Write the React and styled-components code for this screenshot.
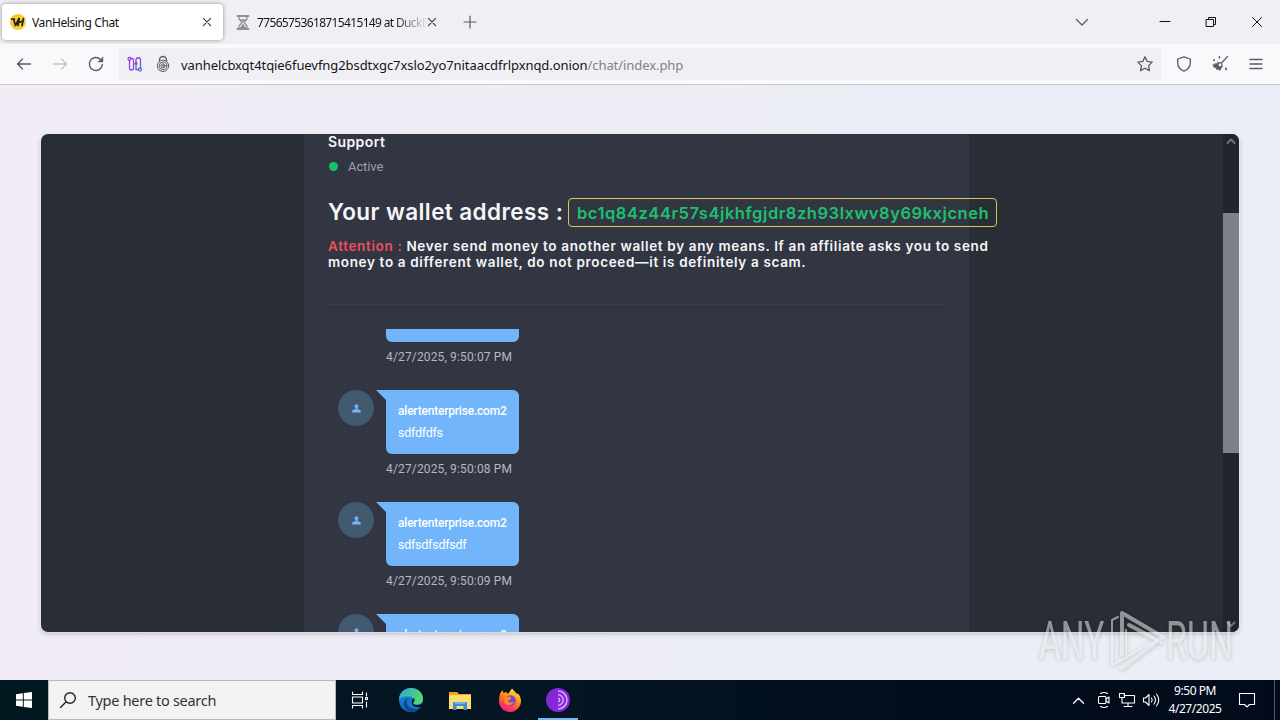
import React from "react";
import styled, { createGlobalStyle } from "styled-components";

const UI_FONT = `"Noto Sans", "Open Sans", sans-serif`;
const CHAT_FONT = `Roboto, "Liberation Sans", sans-serif`;
const HEADING_FONT = `Inter, "Liberation Sans", sans-serif`;

const MESSAGES = [
  { id: 1, text: "dsfsdf", time: "4/27/2025, 9:50:07 PM" },
  { id: 2, text: "sdfdfdfs", time: "4/27/2025, 9:50:08 PM" },
  { id: 3, text: "sdfsdfsdfsdf", time: "4/27/2025, 9:50:09 PM" },
  { id: 4, text: "sdfsdf", time: "4/27/2025, 9:50:10 PM" },
];

const GlobalStyle = createGlobalStyle`
  * { box-sizing: border-box; }
  body { margin: 0; overflow: hidden; }
`;

const Screen = styled.div`
  position: relative;
  display: flex;
  flex-direction: column;
  width: 1280px;
  height: 720px;
  overflow: hidden;
  font-family: ${UI_FONT};
  color: #15141a;
`;

const Icon = styled.svg`
  display: block;
  flex: none;
  width: ${props => props.$w || 16}px;
  height: ${props => props.$h || props.$w || 16}px;
  margin-left: ${props => props.$ml || 0}px;
  overflow: visible;
  fill: none;
  stroke: ${props => props.$color || "#5b5b66"};
  stroke-width: ${props => props.$stroke || 1.3};
  stroke-linecap: round;
  stroke-linejoin: round;
`;

// BROWSER
const TabStrip = styled.div`
  display: flex;
  flex: none;
  align-items: center;
  height: 44px;
  padding-left: 2px;
  background: #f0f0f4;
`;
const Tab = styled.div`
  display: flex;
  align-items: center;
  width: ${props => (props.$active ? 221 : 224)}px;
  height: 36px;
  padding: 0 ${props => (props.$active ? 12 : 11)}px 0 8px;
  border-radius: 4px;
  background: ${props => (props.$active ? "#fff" : "none")};
  box-shadow: ${props => (props.$active ? "0 0 4px rgba(0, 0, 0, 0.4)" : "none")};
`;
const TabTitle = styled.div`
  flex: 1;
  margin-left: ${props => (props.$faded ? 8 : 6)}px;
  overflow: hidden;
  white-space: nowrap;
  font-size: 12px;
  letter-spacing: ${props => props.$spacing}px;
  mask-image: ${props =>
    props.$faded ? "linear-gradient(to left, transparent, #000 34px)" : "none"};
`;
const Toolbar = styled.div`
  display: flex;
  flex: none;
  align-items: center;
  height: 41px;
  padding-left: 16px;
  background: #f9f9fb;
  border-bottom: 1px solid #cacad0;
`;
const AddressBar = styled.div`
  display: flex;
  align-items: center;
  width: 1042px;
  height: 32px;
  margin-left: 15px;
  padding: 0 8px;
  background: #f0f0f4;
`;
const Url = styled.div`
  flex: 1;
  margin-left: 11px;
  padding-top: 1px;
  white-space: nowrap;
  font-size: 13px;
  letter-spacing: -0.07px;
`;
const UrlPath = styled.span`
  color: #80808a;
`;

// PAGE
const Page = styled.main`
  display: flex;
  flex: none;
  justify-content: center;
  height: 595px;
  padding-top: 49px;
  background: linear-gradient(100deg, #f2ecf6 0%, #efecf5 30%, #ebeef6 65%, #ebeef6 100%);
`;
const Card = styled.div`
  display: flex;
  width: 1198px;
  height: 498px;
  overflow: hidden;
  border-radius: 7px;
  background: #292d36;
  box-shadow: 0 0 0 1px rgba(255, 255, 255, 0.35), 0 2px 5px rgba(40, 45, 60, 0.25);
`;
const Side = styled.div`
  width: ${props => props.$width}px;
`;
const Chat = styled.section`
  display: flex;
  flex-direction: column;
  width: 665px;
  padding: 0 25px 0 24px;
  background: #323642;
  font-family: ${CHAT_FONT};
`;
const ChatHeader = styled.header`
  height: 171px;
  flex: none;
  border-bottom: 1px solid #3a3e4a;
`;
const Contact = styled.div`
  height: 16px;
  color: #f6f6f9;
  font: 600 14px/16px ${HEADING_FONT};
  letter-spacing: 0.4px;
`;
const Status = styled.div`
  display: flex;
  align-items: center;
  height: 33px;
  color: #9a9dad;
  font-size: 13px;
  line-height: 31px;
  letter-spacing: -0.1px;
`;
const Dot = styled.span`
  width: 9px;
  height: 9px;
  margin: 0 10px 0 1px;
  border-radius: 50%;
  background: #18c26a;
`;
const Wallet = styled.div`
  width: 669px;
  position: relative;
  padding-top: 15px;
  color: #f6f6f9;
  font-family: ${HEADING_FONT};
`;
const WalletRow = styled.div`
  display: flex;
  align-items: flex-start;
  justify-content: space-between;
  height: 29px;
  white-space: nowrap;
`;
const WalletLabel = styled.div`
  font-size: 22.5px;
  font-weight: 600;
  line-height: 27px;
  letter-spacing: 0.41px;
`;
const Address = styled.div`
  width: 429px;
  height: 29px;
  padding-left: 8px;
  border: 1px solid #dfc458;
  border-radius: 4px;
  color: #1cc06f;
  font-size: 16.5px;
  font-weight: 600;
  line-height: 28px;
  letter-spacing: 0.55px;
`;
const Warning = styled.div`
  margin-top: 11px;
  font-size: 13.5px;
  font-weight: 600;
  line-height: 16px;
  letter-spacing: 0.65px;
  white-space: nowrap;
`;
const Danger = styled.span`
  color: #ee505b;
`;

const MessageList = styled.div`
  display: flex;
  flex: 1;
  flex-direction: column;
  justify-content: flex-start;
  min-height: 0;
  margin-top: 24px;
  overflow: hidden;
`;
const Message = styled.div`
  display: flex;
  flex: none;
  height: 112px;
  padding-left: 10px;

  &:first-child {
    margin-top: -51px;
  }
`;
const Avatar = styled.div`
  display: flex;
  align-items: center;
  justify-content: center;
  width: 36px;
  height: 36px;
  margin-right: 12px;
  border-radius: 50%;
  background: #435970;
`;
const Bubble = styled.div`
  position: relative;
  width: 133px;
  height: 64px;
  padding: 10px 12px;
  border-radius: 0 6px 6px 6px;
  background: #72b5fb;
  color: #fff;
  font-size: 12.5px;
  letter-spacing: -0.25px;
  line-height: 22px;
  white-space: nowrap;

  &::before {
    content: "";
    position: absolute;
    top: 0;
    left: -10px;
    border: 5px solid transparent;
    border-top-color: #72b5fb;
    border-right-color: #72b5fb;
  }
`;
const Sender = styled.div`
  font-size: 12px;
  font-weight: 500;
  letter-spacing: -0.2px;
`;
const Time = styled.div`
  margin-top: 7px;
  color: #b6b8c2;
  font-size: 12px;
  line-height: 16px;
  letter-spacing: 0.15px;
`;

const Scrollbar = styled.div`
  display: flex;
  flex-direction: column;
  align-items: center;
  justify-content: space-between;
  width: 16px;
  padding: 5px 0;
  background: #22252f;
`;
const Thumb = styled.div`
  width: 16px;
  height: 240px;
  margin-bottom: 101px;
  background: #7f8188;
`;

const Watermark = styled.div`
  position: absolute;
  top: 608px;
  left: 1039px;
  display: flex;
  align-items: center;
  height: 66px;
  color: rgba(255, 255, 255, 0.5);
  filter: drop-shadow(0 1px 2px rgba(0, 0, 0, 0.35));
`;
const WatermarkWord = styled.div`
  width: ${props => props.$width}px;
  font: 400 53px/66px Roboto, sans-serif;
  transform: scaleX(${props => props.$scale});
  transform-origin: left;
  white-space: nowrap;
`;

// TASKBAR
const Taskbar = styled.footer`
  display: flex;
  flex: none;
  align-items: center;
  height: 40px;
  background: linear-gradient(90deg, #021820, #031522 45%, #020d1c 75%, #020b1a);
  color: #fff;
`;
const StartButton = styled.div`
  display: flex;
  align-items: center;
  width: 48px;
  padding-left: 16px;
`;
const SearchBox = styled.div`
  display: flex;
  align-items: center;
  width: 288px;
  height: 40px;
  padding-left: 11px;
  border: 1px solid #b9b9b9;
  background: #f2f2f2;
  color: #333;
  font-size: 14.5px;
`;
const SearchText = styled.span`
  margin-left: 12px;
  letter-spacing: -0.28px;
`;
const AppButton = styled.div`
  display: flex;
  align-items: center;
  justify-content: center;
  width: ${props => props.$width || 49}px;
  height: 40px;
  border-bottom: 2px solid ${props => (props.$active ? "#76b9ed" : "transparent")};
  padding-top: 2px;
`;
const Tray = styled.div`
  display: flex;
  align-items: center;
  height: 40px;
  margin-left: auto;
`;
const Clock = styled.div`
  width: 60px;
  margin-left: 5px;
  font-size: 12px;
  line-height: 18px;
  letter-spacing: -0.45px;
  text-align: center;
  white-space: nowrap;
`;
const ShowDesktop = styled.div`
  width: 6px;
  height: 40px;
  margin-left: 19px;
  border-left: 1px solid #4d5660;
`;

const CloseIcon = ({ size = 8, ...props }) => (
  <Icon $w={size} viewBox="0 0 10 10" {...props}>
    <path d="M.5.5l9 9M9.5.5l-9 9" />
  </Icon>
);

const Favicon = () => (
  <Icon $w={16} viewBox="0 0 16 16">
    <circle cx="8" cy="8" r="8" fill="#f5cf30" stroke="none" />
    <path d="M1.5 5h3M3.5 5l2 6.5L9 4.5M9.2 4.5L8 11.5M13.5 4.5L12 11.5M8.5 8.5L13 7" stroke="#20211d" strokeWidth="1.7" />
  </Icon>
);

const Hourglass = () => (
  <Icon $w={12} $h={15} viewBox="0 0 12 15" $color="#909096" $ml={6}>
    <path d="M.5 1h11M.5 14h11" strokeWidth="2" />
    <path d="M2 1.500v2.500L5 7.500 2 11v2.500M10 1.500v2.500L7 7.500l3 3.500v2.500" />
    <path d="M3.500 4.500h5L6 7zM3 13l3-4 3 4z" fill="#909096" strokeWidth=".5" />
  </Icon>
);

const Navigation = () => (
  <>
    <Icon viewBox="0 0 16 16" $w={16}>
      <path d="M14.500 8H1.500M6.500 3L1.500 8l5 5" />
    </Icon>
    <Icon viewBox="0 0 16 16" $w={16} $ml={20} $color="#c2c2c8">
      <path d="M1.500 8h13M9.500 3l5 5-5 5" />
    </Icon>
    <Icon viewBox="0 0 16 16" $w={16} $ml={20} $stroke={1.4}>
      <path d="M14.300 8.500A6.500 6.500 0 1 1 12.500 3.500L14 5" />
      <path d="M15 1v5h-5z" fill="#5b5b66" strokeWidth=".4" />
    </Icon>
  </>
);

const CircuitIcon = () => (
  <Icon viewBox="0 0 16 16" $w={16} $color="url(#circuit)" $stroke={1.3}>
    <defs>
      <linearGradient id="circuit" x1="0" y1="0" x2="16" y2="16" gradientUnits="userSpaceOnUse">
        <stop stopColor="#c026e8" />
        <stop offset="1" stopColor="#3a7bc8" />
      </linearGradient>
    </defs>
    <circle cx="2.500" cy="2.800" r="1.500" />
    <circle cx="13" cy="13.500" r="1.500" />
    <path d="M2.500 4.500v7.500a2 2 0 0 0 4 0V7M4 2.500h1.500a1.500 1.500 0 0 1 1 1.500V6M9 13.500V4a2 2 0 0 1 4.500 0v7.500" />
    <path d="M9 13.500h2" />
    <circle cx="9" cy="7.500" r="1" />
  </Icon>
);

const OnionLock = () => (
  <Icon viewBox="0 0 14 16" $w={14} $h={16} $ml={13} $stroke={1}>
    <path d="M3.500 5V4a3.500 3.500 0 0 1 7 0v1" strokeWidth="1.400" />
    <circle cx="7" cy="9.800" r="5.700" />
    <circle cx="7" cy="9.800" r="3.800" />
    <circle cx="7" cy="9.800" r="2" />
    <circle cx="7" cy="9.800" r=".5" />
  </Icon>
);

const PersonIcon = () => (
  <Icon viewBox="0 0 10 10" $w={9} stroke="none">
    <path
      d="M5 .3a2.300 2.300 0 0 1 1 4.300v1.100c2 .1 3.800.9 3.800 2.200v1.500H.2V7.900c0-1.300 1.800-2.100 3.800-2.200V4.600A2.300 2.300 0 0 1 5 .3z"
      fill="#72b5fb"
      stroke="none"
    />
  </Icon>
);

const ChatMessage = ({ message }) => (
  <Message>
    <Avatar>
      <PersonIcon />
    </Avatar>
    <div>
      <Bubble>
        <Sender>alertenterprise.com2</Sender>
        {message.text}
      </Bubble>
      <Time>{message.time}</Time>
    </div>
  </Message>
);

const EdgeIcon = () => (
  <Icon viewBox="0 0 24 24" $w={24}>
    <defs>
      <linearGradient id="edgeTop" x1="0" y1="0" x2="1" y2=".4">
        <stop stopColor="#2ba5df" />
        <stop offset="1" stopColor="#54d876" />
      </linearGradient>
    </defs>
    <g stroke="none">
      <circle cx="12" cy="12" r="12" fill="#1477c9" />
      <path d="M0 12C0 4 6 0 12 0c7 0 12 5 12 10.500 0 4-3 6-6.500 6-3 0-4-1-3-2.500 1-2 0-5-4-5.500C5 8 1 10 0 12z" fill="url(#edgeTop)" />
      <path d="M9 10c-3 5 0 10 6 11 3 .4 5.500-.8 7-2.500-2 3.500-6 5.500-10 5.500C4 23 2 14 9 10z" fill="#104b91" />
      <path d="M14.500 14c-1 1.500 0 3 3.500 3 2 0 4-.5 6-2-.5 1.500-1 2.500-2 3.700-5 1.800-10-1.200-9-5.200.4-2 1-2.500 1.500-3.500 1.500 1 1.500 2.500 0 4z" fill="#021820" />
    </g>
  </Icon>
);

const FolderIcon = () => (
  <Icon viewBox="0 0 22 19" $w={22} $h={19}>
    <g stroke="none">
      <path d="M0 1h8l2 2h12v15H0z" fill="#e9a927" />
      <path d="M0 4h22v14H0z" fill="#ffdc70" />
      <path d="M4 11h14v8h-3.500v-4h-7v4H4z" fill="#3991d4" />
      <path d="M6 11h10v2H6z" fill="#65b5e8" />
    </g>
  </Icon>
);

const FirefoxIcon = () => (
  <Icon viewBox="0 0 24 24" $w={24}>
    <defs>
      <linearGradient id="fire" x1=".8" y1="0" x2=".3" y2="1">
        <stop stopColor="#fff044" />
        <stop offset=".4" stopColor="#ff980e" />
        <stop offset=".75" stopColor="#ff3d4f" />
        <stop offset="1" stopColor="#e5218a" />
      </linearGradient>
    </defs>
    <g stroke="none">
      <path d="M2 5.500L4.500 2l1 3L8 4l2 2 4-5.500 4.500 5 2 .5c2 3 2.500 5 2.500 7C23 19 18 24 12 24S1 19.500 1 13c0-3 .5-5 1-7.500z" fill="url(#fire)" />
      <circle cx="12.500" cy="12.500" r="5.300" fill="#7845d8" />
      <path d="M6 9l6-.5 1.500 2-3.500 2c1 3 4 2 6 1-1 4-7 5-9.500 1z" fill="#ff8b25" />
    </g>
  </Icon>
);

const TorIcon = () => (
  <Icon viewBox="0 0 24 24" $w={24} $color="#dda7ff" $stroke={1.5}>
    <circle cx="12" cy="12" r="12" fill="#8427d5" stroke="none" />
    <path d="M12 3a9 9 0 0 1 0 18M12 6.800a5.200 5.200 0 0 1 0 10.400M12 10.300a1.700 1.700 0 0 1 0 3.400" strokeLinecap="butt" />
  </Icon>
);

const TrayIcons = () => (
  <>
    <Icon viewBox="0 0 12 7" $w={11} $h={7} $color="#fff">
      <path d="M.5 6.500L6 1l5.500 5.500" />
    </Icon>
    <Icon viewBox="0 0 12 16" $w={12} $h={16} $ml={14} $color="#fff" $stroke={1.1}>
      <rect x=".5" y="4.500" width="7.500" height="7" rx="1" />
      <path d="M8 7l3-2v6L8 9M2.500 1.500q3.500-2 7 0M2.500 14.500q3.500 2 7 0" />
    </Icon>
    <Icon viewBox="0 0 16 14" $w={16} $h={14} $ml={9} $color="#fff" $stroke={1.1}>
      <path d="M5 2.500h10.500v7.500H4.500M3 5v5h1.500M5 13.500h8M9 10v3.500M.5.500h5v4h-5z" />
    </Icon>
    <Icon viewBox="0 0 17 14" $w={17} $h={14} $ml={8} $color="#fff" $stroke={1.1}>
      <path d="M.5 5h2l3.500-3.500v11L2.500 9h-2zM8.500 5q1.500 2 0 4M11 3q3 4 0 8M13.500 1q4.500 6 0 12" />
    </Icon>
  </>
);

export default function App() {
  return (
    <Screen>
      <GlobalStyle />
      <TabStrip>
        <Tab $active>
          <Favicon />
          <TabTitle $spacing={-0.4}>VanHelsing Chat</TabTitle>
          <CloseIcon $color="#333" />
        </Tab>
        <Tab>
          <Hourglass />
          <TabTitle $spacing={-0.65} $faded>
            77565753618715415149 at DuckDuckGo
          </TabTitle>
          <CloseIcon $color="#333" />
        </Tab>
        <Icon viewBox="0 0 12 12" $w={12} $ml={17} $stroke={1.2}>
          <path d="M6 0v12M0 6h12" />
        </Icon>
        <Icon viewBox="0 0 12 7" $w={12} $h={7} $ml={600}>
          <path d="M.5.5L6 6 11.500.5" />
        </Icon>
        <Icon viewBox="0 0 10 10" $w={10} $ml={72} $color="#111" $stroke={1}>
          <path d="M0 4.500h10" />
        </Icon>
        <Icon viewBox="0 0 10 10" $w={10} $ml={36} $color="#111" $stroke={1}>
          <path d="M.5 2.500h7v7h-7zM2.500 2.500v-2h7v7h-2" />
        </Icon>
        <CloseIcon size={10} $ml={36} $color="#111" $stroke={1} />
      </TabStrip>
      <Toolbar>
        <Navigation />
        <AddressBar>
          <CircuitIcon />
          <OnionLock />
          <Url>
            vanhelcbxqt4tqie6fuevfng2bsdtxgc7xslo2yo7nitaacdfrlpxnqd.onion
            <UrlPath>/chat/index.php</UrlPath>
          </Url>
          <Icon viewBox="0 0 16 16" $w={16}>
            <path d="M8 .8l2.200 4.600 5 .7-3.600 3.500.9 5L8 12.200l-4.500 2.400.9-5L.8 6.100l5-.7z" />
          </Icon>
        </AddressBar>
        <Icon viewBox="0 0 14 16" $w={14} $h={16} $ml={16}>
          <path d="M7 .8L13.300 3v3.500c0 4.500-3 7.500-6.300 8.700C3.700 14 .7 11 .7 6.500V3z" />
        </Icon>
        <Icon viewBox="0 0 16 16" $w={16} $ml={21} $stroke={1.2}>
          <path d="M15.500.5L9.500 7" />
          <path d="M5.500 5.500L10.500 10.500M7 6.500c2-.5 4 1.500 3 4l-2 4-2-1.500-1 1-1-3-1.500 1L1 9z" fill="#5b5b66" strokeWidth=".7" />
          <circle cx="8" cy="9" r="1.400" fill="#f9f9fb" stroke="none" />
          <path d="M2 3.800v.5M7.500 1v.5M14 12.500v.8" strokeWidth="1.800" />
        </Icon>
        <Icon viewBox="0 0 12 10" $w={12} $h={10} $ml={22}>
          <path d="M0 .5h12M0 5h12M0 9.500h12" />
        </Icon>
      </Toolbar>

      <Page>
        <Card>
          <Side $width={263} />
          <Chat>
            <ChatHeader>
              <Contact>Support</Contact>
              <Status>
                <Dot />
                Active
              </Status>
              <Wallet>
                <WalletRow>
                  <WalletLabel>Your wallet address :</WalletLabel>
                  <Address>bc1q84z44r57s4jkhfgjdr8zh93lxwv8y69kxjcneh</Address>
                </WalletRow>
                <Warning>
                  <Danger>Attention :</Danger> Never send money to another wallet by any
                  means. If an affiliate asks you to send
                  <br />
                  money to a different wallet, do not proceed—it is definitely a scam.
                </Warning>
              </Wallet>
            </ChatHeader>
            <MessageList>
              {MESSAGES.map(message => (
                <ChatMessage key={message.id} message={message} />
              ))}
            </MessageList>
          </Chat>
          <Side $width={254} />
          <Scrollbar>
            <Icon viewBox="0 0 8 5" $w={8} $h={5} $color="#72757e" $stroke={1.8}>
              <path d="M.5 4L4 .5 7.500 4" />
            </Icon>
            <Thumb />
            <Icon viewBox="0 0 8 5" $w={8} $h={5} $color="#72757e" $stroke={1.8}>
              <path d="M.5.5L4 4 7.500.5" />
            </Icon>
          </Scrollbar>
        </Card>
      </Page>

      <Taskbar>
        <StartButton>
          <Icon viewBox="0 0 16 16" $w={16}>
            <path d="M0 2.200L6.800 1.200V7.500H0zM7.800 1L16 0v7.500H7.800zM0 8.500h6.800v6.300L0 13.800zM7.800 8.500H16V16l-8.200-1.100z" fill="#fff" stroke="none" />
          </Icon>
        </StartButton>
        <SearchBox>
          <Icon viewBox="0 0 16 16" $w={16} $color="#222" $stroke={1.4}>
            <circle cx="10" cy="6" r="5.300" />
            <path d="M6.200 9.800L.5 15.500" />
          </Icon>
          <SearchText>Type here to search</SearchText>
        </SearchBox>
        <AppButton $width={48}>
          <Icon viewBox="0 0 16 16" $w={16} $color="#fff" $stroke={1.1}>
            <path d="M.5 0v2.500h10V0M.5 5h10v6H.5zM.5 16v-2.500h10V16M14.500 1v3M14.500 10v5M13.500 5.500h2v2h-2z" />
          </Icon>
        </AppButton>
        <AppButton $width={54}>
          <EdgeIcon />
        </AppButton>
        <AppButton $width={43}>
          <FolderIcon />
        </AppButton>
        <AppButton $width={57}>
          <FirefoxIcon />
        </AppButton>
        <AppButton $active $width={40}>
          <TorIcon />
        </AppButton>
        <Tray>
          <TrayIcons />
          <Clock>
            9:50 PM
            <br />
            4/27/2025
          </Clock>
          <Icon viewBox="0 0 16 16" $w={16} $ml={14} $color="#fff" $stroke={1.1}>
            <path d="M.5 1.500h15v11h-5L8 15l-2.500-2.500h-5z" />
          </Icon>
          <ShowDesktop />
        </Tray>
      </Taskbar>

      <Watermark>
        <WatermarkWord $width={69} $scale={0.63}>ANY</WatermarkWord>
        <Icon viewBox="0 0 58 66" $w={58} $h={66} $color="rgba(255,255,255,.5)" $stroke={4}>
          <path d="M14 47V5l41 24L14 60M21 17l32 17" />
          <path d="M10 9L4 12v45l45-25M18 50V22" strokeWidth="2" />
        </Icon>
        <WatermarkWord $width={66} $scale={0.64}>RUN</WatermarkWord>
      </Watermark>
    </Screen>
  );
}
